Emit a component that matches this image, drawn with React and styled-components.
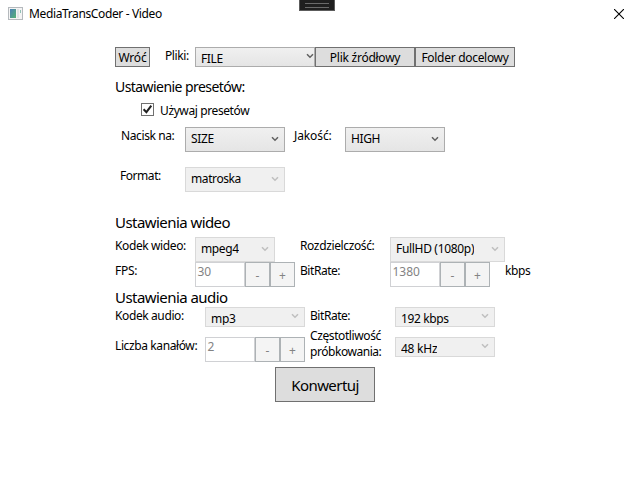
import React from "react";
import styled, { createGlobalStyle } from "styled-components";

const GlobalStyle = createGlobalStyle`
  * { box-sizing: border-box; }
  body { margin: 0; background: #fff; overflow: hidden; }
`;

const Window = styled.main`
  width: 633px;
  height: 489px;
  background: #fff;
  color: #000;
  font: 12px/16px "Noto Sans", "Open Sans", sans-serif;
  white-space: nowrap;
`;

const TitleBar = styled.header`
  position: relative;
  display: flex;
  align-items: center;
  height: 27px;
  padding: 0 9px 0 8px;
`;

const Title = styled.span`
  flex: 1;
  margin-left: 6px;
  padding-top: 1px;
  letter-spacing: -0.37px;
`;

const DebugHandle = styled.div`
  position: absolute;
  left: 299px;
  top: 0;
  width: 36px;
  height: 11px;
  padding: 3px 5px 0;
  background: #1f1f1f;
  border: 1px solid #5c5c5c;
  border-top: 0;
  &::before {
    content: "";
    display: block;
    height: 3px;
    border: solid #6a6a6a;
    border-width: 1px 0;
  }
`;

const Form = styled.form`
  padding: 20px 0 0 115px;
`;

const Row = styled.div`
  display: flex;
  align-items: flex-start;
  height: ${(p) => p.$h}px;
  padding-left: ${(p) => p.$indent || 0}px;
`;

const Label = styled.label`
  flex: none;
  width: ${(p) => p.$w}px;
  padding-top: 1px;
  letter-spacing: ${(p) => p.$track ?? -0.39}px;
`;

const TallLabel = styled(Label)`
  margin-top: -10px;
`;

const LabelLine = styled.span`
  display: block;
  letter-spacing: ${(p) => p.$track}px;
`;

const Heading = styled.h2`
  margin: 0;
  height: ${(p) => p.$h}px;
  font-weight: 400;
  font-size: ${(p) => p.$size}px;
  line-height: ${(p) => p.$line}px;
  letter-spacing: -0.56px;
`;

const ComboBox = styled.div`
  flex: none;
  display: flex;
  justify-content: space-between;
  width: ${(p) => p.$w}px;
  height: ${(p) => p.$h || 25}px;
  margin-right: ${(p) => p.$gap || 0}px;
  padding: 3px ${(p) => p.$inset ?? 5}px 0 5px;
  overflow: clip;
  border: 1px solid ${(p) => (p.$disabled ? "#d9d9d9" : "#acacac")};
  background: ${(p) => (p.$disabled ? "#f0f0f0" : "linear-gradient(#f0f0f0, #e5e5e5)")};
  letter-spacing: ${(p) => p.$track ?? -0.3}px;
`;

const ComboText = styled.span`
  height: ${(p) => (p.$clip ? "14px" : "18px")};
  overflow: hidden;
`;

const Chevron = styled.svg`
  width: 8px;
  height: 6px;
  margin-top: ${(p) => (p.$small ? 2 : 5)}px;
  fill: none;
  stroke: ${(p) => (p.$disabled ? "#bfbfbf" : "#606060")};
  stroke-width: 1.5;
`;

const Button = styled.button`
  flex: none;
  width: ${(p) => p.$w}px;
  height: 20px;
  padding: 2px 0 0;
  border: 1px solid #707070;
  border-radius: 0;
  background: #ddd;
  color: #000;
  font: inherit;
  letter-spacing: ${(p) => p.$track}px;
`;

const FirstButton = styled(Button)`
  margin-right: 15px;
`;

const ConvertButton = styled(Button)`
  height: 35px;
  padding-top: 1px;
  font-size: 15px;
`;

const StepperBox = styled.div`
  flex: none;
  display: flex;
  margin-right: ${(p) => p.$gap}px;
`;

const NumberField = styled.div`
  width: 50px;
  height: 25px;
  padding: 1px 0 0 1.5px;
  border: 1px solid #d0d1d4;
  color: #838383;
`;

const StepButton = styled(Button)`
  width: 25px;
  height: 25px;
  padding-top: 2px;
  border-color: #adb2b5;
  background: #f4f4f4;
  color: #838383;
`;

const CheckBox = styled.span`
  display: flex;
  width: 13px;
  height: 13px;
  margin: 1px 6px 0 0;
  border: 1px solid #707070;
`;

function Combo({ value, small, disabled, clip, ...rest }) {
  return (
    <ComboBox $h={small ? 20 : 25} $disabled={disabled} {...rest}>
      <ComboText $clip={clip}>{value}</ComboText>
      <Chevron $small={small} $disabled={disabled} viewBox="0 0 8 6">
        <path d="M1 1.2 4 4.2 7 1.2" />
      </Chevron>
    </ComboBox>
  );
}

function Stepper({ value, gap }) {
  return (
    <StepperBox $gap={gap}>
      <NumberField>{value}</NumberField>
      <StepButton type="button">-</StepButton>
      <StepButton type="button">+</StepButton>
    </StepperBox>
  );
}

function AppIcon() {
  return (
    <svg width="15" height="13" viewBox="0 0 15 13">
      <defs>
        <linearGradient id="pane" x1="0" y1="0" x2="1" y2="1">
          <stop offset="0" stopColor="#4b7fb5" />
          <stop offset="1" stopColor="#55b374" />
        </linearGradient>
      </defs>
      <rect x="0.5" y="0.5" width="14" height="12" fill="#f4f4f4" stroke="#b5b9bd" />
      <rect x="2" y="2" width="6" height="9" fill="url(#pane)" />
      <rect x="9" y="2" width="2" height="9" fill="#e0e3e5" />
      <rect x="12" y="3" width="1" height="3" fill="#8fc0b4" />
    </svg>
  );
}

export default function App() {
  return (
    <>
      <GlobalStyle />
      <Window>
        <TitleBar>
          <AppIcon />
          <Title>MediaTransCoder - Video</Title>
          <DebugHandle />
          <svg width="10" height="10" viewBox="0 0 10 10" stroke="#000" strokeWidth="1.1">
            <path d="M0 0 10 10M10 0 0 10" />
          </svg>
        </TitleBar>
        <Form>
          <Row $h={30}>
            <FirstButton type="button" $w={35} $track={-0.2}>Wróć</FirstButton>
            <Label $w={30}>Pliki:</Label>
            <Combo $w={120} $inset={0} value="FILE" $track={-0.4} small />
            <Button type="button" $w={100} $track={-0.25}>Plik źródłowy</Button>
            <Button type="button" $w={100} $track={-0.3}>Folder docelowy</Button>
          </Row>
          <Heading $size={14} $h={25} $line={20}>Ustawienie presetów:</Heading>
          <Row $h={25} $indent={26}>
            <CheckBox>
              <svg width="11" height="11" viewBox="0 0 11 11" fill="none" stroke="#212121" strokeWidth="2">
                <path d="M1.6 5.2 4.4 8.2 9.3 1.6" />
              </svg>
            </CheckBox>
            <Label>Używaj presetów</Label>
          </Row>
          <Row $h={40} $indent={6}>
            <Label $w={64}>Nacisk na:</Label>
            <Combo $w={100} $gap={9} $track={-0.3} value="SIZE" />
            <Label $w={51} $track={-0.1}>Jakość:</Label>
            <Combo $w={100} $track={-0.4} value="HIGH" />
          </Row>
          <Row $h={46} $indent={5}>
            <Label $w={65} $track={-0.45}>Format:</Label>
            <Combo $w={100} $track={-0.4} value="matroska" disabled />
          </Row>
          <Heading $size={15} $h={24} $line={18}>Ustawienia wideo</Heading>
          <Row $h={25}>
            <Label $w={80}>Kodek wideo:</Label>
            <Combo $w={80} $gap={25} $track={-0.4} value="mpeg4" disabled />
            <Label $w={90} $track={-0.37}>Rozdzielczość:</Label>
            <Combo $w={115} $track={-0.32} value="FullHD (1080p)" disabled />
          </Row>
          <Row $h={27}>
            <Label $w={80} $track={-0.3}>FPS:</Label>
            <Stepper value="30" gap={5} />
            <Label $w={90} $track={-0.45}>BitRate:</Label>
            <Stepper value="1380" gap={15} />
            <Label>kbps</Label>
          </Row>
          <Heading $size={15} $h={18} $line={17}>Ustawienia audio</Heading>
          <Row $h={30}>
            <Label $w={90}>Kodek audio:</Label>
            <Combo $w={100} $gap={5} value="mp3" small disabled clip />
            <Label $w={85} $track={-0.45}>BitRate:</Label>
            <Combo $w={100} $track={-0.38} value="192 kbps" small disabled clip />
          </Row>
          <Row $h={30}>
            <Label $w={90}>Liczba kanałów:</Label>
            <Stepper value="2" gap={5} />
            <TallLabel $w={85}>
              <LabelLine $track={-0.4}>Częstotliwość</LabelLine>
              <LabelLine $track={-0.45}>próbkowania:</LabelLine>
            </TallLabel>
            <Combo $w={100} $track={-0.25} value="48 kHz" small disabled />
          </Row>
          <Row $h={35} $indent={160}>
            <ConvertButton type="button" $w={100} $track={-0.57}>Konwertuj</ConvertButton>
          </Row>
        </Form>
      </Window>
    </>
  );
}
